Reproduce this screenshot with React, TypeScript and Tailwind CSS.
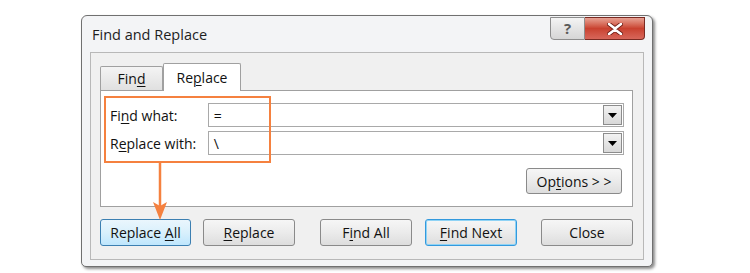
import React from "react";

const font = { fontFamily: '"Open Sans", "Noto Sans", sans-serif' };

function U({ children }: { children: React.ReactNode }) {
  return <span className="underline underline-offset-2 decoration-1">{children}</span>;
}

function Btn({
  children,
  variant = "normal",
}: {
  children: React.ReactNode;
  variant?: "normal" | "hover" | "default";
}) {
  const look =
    variant === "hover"
      ? "border-[#3c7fb1] bg-gradient-to-b from-[#eaf6fd] via-[#d9f0fc] to-[#bee6fd]"
      : variant === "default"
        ? "border-[#3399dd] bg-gradient-to-b from-[#f6f6f6] via-[#ebebeb] to-[#dddddd] shadow-[inset_0_0_0_1px_#8fd3f5]"
        : "border-[#8a8a8a] bg-gradient-to-b from-[#f6f6f6] via-[#ebebeb] to-[#dddddd]";
  return (
    <div
      className={`w-[92px] h-[27px] rounded-[3px] border flex items-center justify-center text-[14px] text-[#111] ${look}`}
    >
      <span>{children}</span>
    </div>
  );
}

function Combo({ value }: { value: string }) {
  return (
    <div className="w-[417px] h-[24px] border border-[#a9a9a9] bg-white flex items-center justify-between">
      <span className="pl-[5px] text-[14px] text-[#111]">{value}</span>
      <div className="w-[19px] h-[20px] mr-[1px] border border-[#8c8c8c] bg-gradient-to-b from-[#f2f2f2] to-[#d8d8d8] flex items-center justify-center">
        <svg width="9" height="5" viewBox="0 0 9 5">
          <path d="M0 0h9L4.5 5z" fill="#000" />
        </svg>
      </div>
    </div>
  );
}

export default function App() {
  return (
    <div className="w-[750px] h-[273px] bg-white pl-[81px] pt-[15px]" style={font}>
      <div className="relative w-[572px] h-[252px] border border-[#707070] rounded-t-[6px] rounded-b-[5px] bg-[#f3f4f6] shadow-[2px_2px_3px_rgba(0,0,0,0.45)] flex flex-col">
        {/* title bar */}
        <div className="h-[36px] flex items-start justify-between">
          <div className="pl-[10px] pt-[8px] text-[14.5px] text-[#1e1e1e]">Find and Replace</div>
          <div className="flex mr-[7px] mt-[1px]">
            <div className="w-[35px] h-[23px] border border-[#8d8d8d] rounded-bl-[4px] bg-gradient-to-b from-[#f4f4f4] via-[#e4e4e4] to-[#d6d6d6] flex items-center justify-center">
              <span className="text-[15px] font-bold text-[#5a5a5a] leading-none">?</span>
            </div>
            <div className="w-[60px] h-[23px] border border-l-0 border-[#7a2a22] rounded-br-[4px] bg-gradient-to-b from-[#e6a193] via-[#c9412f] to-[#d7665a] flex items-center justify-center">
              <svg width="16" height="12" viewBox="0 0 16 12">
                <path
                  d="M2 1l6 4.5L14 1M2 11l6-4.5 6 4.5"
                  stroke="#6b1a12"
                  strokeWidth="4.2"
                  fill="none"
                  strokeLinecap="round"
                />
                <path
                  d="M2 1l6 4.5L14 1M2 11l6-4.5 6 4.5"
                  stroke="#fff"
                  strokeWidth="2.6"
                  fill="none"
                  strokeLinecap="round"
                />
              </svg>
            </div>
          </div>
        </div>

        {/* client area */}
        <div className="mx-[8px] h-[208px] border border-[#b8b8b8] bg-[#f0f0f0] pt-[9px] pl-[9px] pr-[10px] flex flex-col">
          {/* tabs */}
          <div className="flex items-end h-[28px] relative z-10">
            <div className="w-[63px] h-[24px] border border-b-0 border-[#a0a0a0] rounded-t-[2px] bg-gradient-to-b from-[#f4f4f4] to-[#e0e0e0] flex items-center justify-center text-[14px] text-[#111]">
              <span>
                Fin<U>d</U>
              </span>
            </div>
            <div className="w-[78px] h-[28px] -mb-[1px] border border-b-0 border-[#a0a0a0] rounded-t-[2px] bg-white flex items-center justify-center text-[14px] text-[#111]">
              <span>
                Re<U>p</U>lace
              </span>
            </div>
          </div>
          {/* tab panel */}
          <div className="h-[117px] border border-[#a0a0a0] bg-white pl-[9px] pr-[8px] pt-[12px] flex flex-col text-[14px] text-[#111]">
            <div className="flex items-center h-[24px]">
              <div className="w-[98px]">
                Fi<U>n</U>d what:
              </div>
              <Combo value="=" />
            </div>
            <div className="flex items-center h-[24px] mt-[4px]">
              <div className="w-[98px]">
                R<U>e</U>place with:
              </div>
              <Combo value="\" />
            </div>
            <div className="flex justify-end mt-[13px] pr-[2px]">
              <div className="w-[96px] h-[26px] rounded-[3px] border border-[#8a8a8a] bg-gradient-to-b from-[#f6f6f6] via-[#ebebeb] to-[#dddddd] flex items-center justify-center">
                <span>
                  Op<U>t</U>ions &gt; &gt;
                </span>
              </div>
            </div>
          </div>
          {/* bottom buttons */}
          <div className="flex mt-[12px]">
            <Btn variant="hover">
              Replace <U>A</U>ll
            </Btn>
            <div className="ml-[12px]">
              <Btn>
                <U>R</U>eplace
              </Btn>
            </div>
            <div className="ml-[25px]">
              <Btn>
                F<U>i</U>nd All
              </Btn>
            </div>
            <div className="ml-[13px]">
              <Btn variant="default">
                <U>F</U>ind Next
              </Btn>
            </div>
            <div className="ml-[24px]">
              <Btn>Close</Btn>
            </div>
          </div>
        </div>

        {/* annotation: orange box + arrow */}
        <div className="absolute left-[22px] top-[80px] w-[167px] h-[67px] border-2 border-[#f5813f]" />
        <svg className="absolute left-[68px] top-[146px]" width="20" height="60" viewBox="0 0 20 60">
          <path d="M10 0V44" stroke="#f5813f" strokeWidth="2.5" />
          <path d="M3 40L10 58 17 40 10 44z" fill="#f5813f" />
        </svg>
      </div>
    </div>
  );
}
